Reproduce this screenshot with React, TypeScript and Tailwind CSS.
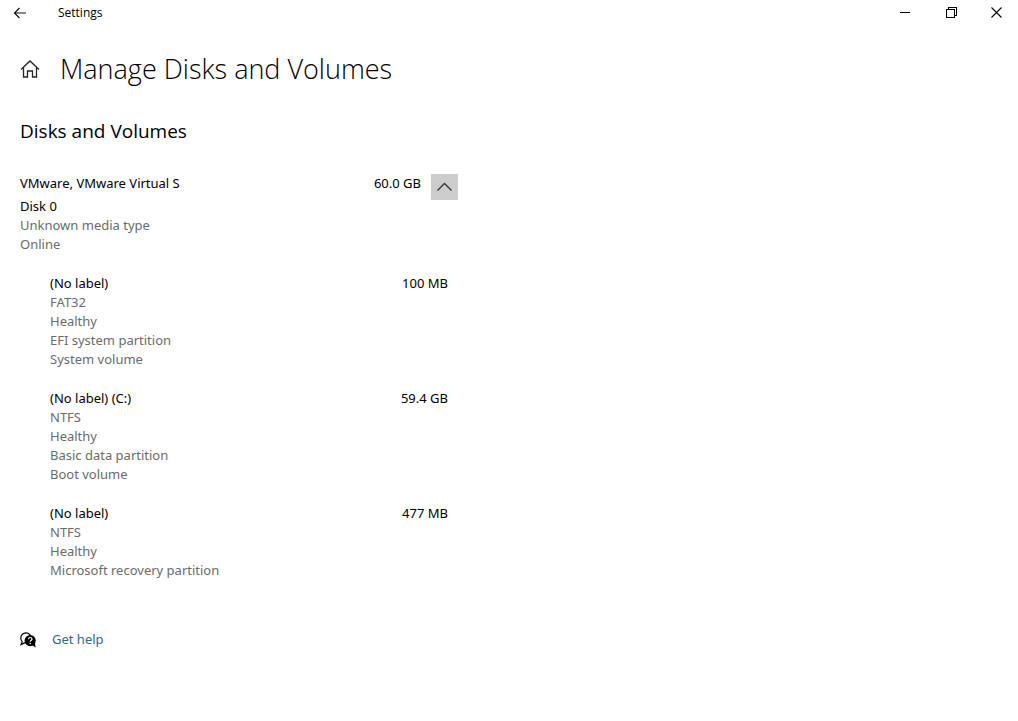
import React, { useState } from "react";

const volumes = [
  {
    label: "(No label)",
    size: "100 MB",
    details: ["FAT32", "Healthy", "EFI system partition", "System volume"],
  },
  {
    label: "(No label) (C:)",
    size: "59.4 GB",
    details: ["NTFS", "Healthy", "Basic data partition", "Boot volume"],
  },
  {
    label: "(No label)",
    size: "477 MB",
    details: ["NTFS", "Healthy", "Microsoft recovery partition"],
  },
];

const TitleBar = () => (
  <header className="flex h-[25px] items-center justify-between">
    <div className="flex h-full items-center">
      <button aria-label="Back" className="flex h-6 w-10 items-center justify-center">
        <svg width="14" height="12" viewBox="0 0 14 12" fill="none" stroke="#111" strokeWidth="1.2">
          <path d="M13 6H1.5M6.5 1L1.5 6l5 5" />
        </svg>
      </button>
      <span className="ml-[18px] font-['Open_Sans',sans-serif] text-[12px] leading-[16px]">Settings</span>
    </div>
    <div className="flex h-full">
      <button aria-label="Minimize" className="flex h-full w-[46px] items-center justify-center">
        <svg width="10" height="11" viewBox="0 0 10 11" stroke="#000" shapeRendering="crispEdges">
          <path d="M0 5.5h10" />
        </svg>
      </button>
      <button aria-label="Restore" className="flex h-full w-[46px] items-center justify-center">
        <svg width="12" height="11" viewBox="0 0 12 11" fill="none" stroke="#000" shapeRendering="crispEdges">
          <path d="M1.5 2.5h8v8h-8zM3.5 2.5v-2h8v8h-2" />
        </svg>
      </button>
      <button aria-label="Close" className="flex h-full w-[44px] items-center justify-center">
        <svg width="11" height="11" viewBox="0 0 11 11" stroke="#000" strokeWidth="1.1">
          <path d="M.5 .5l10 10M10.5 .5l-10 10" />
        </svg>
      </button>
    </div>
  </header>
);

const HomeIcon = () => (
  <svg width="20" height="18" viewBox="0 0 20 18" fill="none" stroke="#222" strokeWidth="1.3">
    <path d="M1 9.5L10 1l9 8.5" />
    <path d="M3.5 7.5v9.5h4v-6h5v6h4V7.5" />
  </svg>
);

const HelpIcon = () => (
  <svg width="16" height="16" viewBox="0 0 16 16" fill="none">
    <path
      d="M5.2 10.6L1 12.6l1.2-3A5 5 0 0 1 .8 6a5.2 5.2 0 0 1 9.6-2.6"
      stroke="#000"
      strokeWidth="1.2"
    />
    <circle cx="10.2" cy="8.6" r="5.6" fill="#000" />
    <path d="M12 13l3.6 2.6-.8-5z" fill="#000" />
    <path d="M8.5 7.2c0-2.3 3.5-2.2 3.5-.1 0 1.3-1.7 1.2-1.7 2.7" stroke="#fff" strokeWidth="1.2" />
    <circle cx="10.3" cy="11.5" r=".8" fill="#fff" />
  </svg>
);

const App = () => {
  const [open, setOpen] = useState(true);

  return (
    <div className="min-h-screen bg-white font-['Noto_Sans','Open_Sans',sans-serif] text-[13px] leading-[19px] text-black">
      <TitleBar />
      <main className="px-5 pt-[25px]">
        <div className="flex items-center gap-5">
          <a href="#home" aria-label="Home">
            <HomeIcon />
          </a>
          <h1 className="font-['Open_Sans',sans-serif] text-[27px] font-light leading-[38px]">
            Manage Disks and Volumes
          </h1>
        </div>
        <h2 className="mt-[29px] font-['Open_Sans',sans-serif] text-[19px] leading-[28px]">Disks and Volumes</h2>

        <section className="mt-[29px] max-w-[438px]">
          <div className="flex items-start">
            <div className="flex-1">
              <h3 className="mb-1">VMware, VMware Virtual S</h3>
              <p>Disk 0</p>
              <p className="text-[#6b6b6b]">Unknown media type</p>
              <p className="text-[#6b6b6b]">Online</p>
            </div>
            <span className="mr-2.5">60.0 GB</span>
            <button
              aria-label="Show volumes"
              aria-expanded={open}
              onClick={() => setOpen(!open)}
              className="flex h-[26px] w-[27px] items-center justify-center bg-[#cccccc]"
            >
              <svg
                width="15"
                height="10"
                viewBox="0 0 15 10"
                fill="none"
                stroke="#333"
                strokeWidth="1.3"
                className={open ? "" : "rotate-180"}
              >
                <path d="M.5 8.5L7.5 1.5l7 7" />
              </svg>
            </button>
          </div>

          {open && (
            <ul className="mt-5 space-y-5 pl-[30px] pr-2.5">
              {volumes.map((volume, index) => (
                <li key={index}>
                  <div className="flex justify-between">
                    <span>{volume.label}</span>
                    <span>{volume.size}</span>
                  </div>
                  {volume.details.map((detail) => (
                    <p key={detail} className="text-[#6b6b6b]">
                      {detail}
                    </p>
                  ))}
                </li>
              ))}
            </ul>
          )}
        </section>

        <div className="mt-[50px] flex items-center gap-4">
          <HelpIcon />
          <a href="#help" className="text-[#2b6a8c]">
            Get help
          </a>
        </div>
      </main>
    </div>
  );
};

export default App;
